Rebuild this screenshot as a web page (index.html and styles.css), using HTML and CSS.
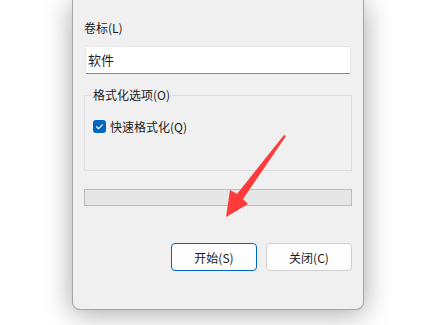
FILE: index.html
```html
<!doctype html>
<html lang="zh-CN">
<head>
    <meta charset="utf-8"/>
    <title>格式化</title>
    <link rel="stylesheet" href="styles.css">
</head>
<body>

<!--对话框-->
<div class="page">
    <div class="dialog">
        <label class="label" for="vol">卷标(L)</label>
        <input class="input" id="vol" type="text" value="软件"/>

        <fieldset class="group">
            <legend>格式化选项(O)</legend>
            <div class="opt">
                <span class="check">
                    <svg width="13" height="13" viewBox="0 0 13 13"><path d="M3.6 6.8 L5.6 8.7 L9.5 4.6" fill="none" stroke="#fff" stroke-width="1.2" stroke-linecap="round" stroke-linejoin="round"/></svg>
                </span>
                <span>快速格式化(Q)</span>
            </div>
        </fieldset>

        <div class="progress"></div>

        <div class="btns">
            <button class="btn primary">开始(S)</button>
            <button class="btn">关闭(C)</button>
        </div>
    </div>
</div>

<!--红色箭头-->
<svg class="arrow" width="429" height="325" viewBox="0 0 429 325">
    <polygon points="286,136 243,199 248,204 226,217 230,190 237,194 284,135" fill="#fe3a3a"/>
</svg>

</body>
</html>
```

FILE: styles.css
```css
* {
    margin: 0;
    padding: 0;
    box-sizing: border-box;
}
body {
    background: #fff;
    font-family: "Noto Sans CJK SC", "Noto Sans", sans-serif;
    font-size: 12px;
    color: #1b1b1b;
    width: 429px;
    height: 325px;
    overflow: hidden;
    position: relative;
}
.page {
    padding-left: 72px;
}
.dialog {
    width: 292px;
    height: 310px;
    background: #f0f0f0;
    border: 1px solid #a4a4a4;
    border-top: 0;
    border-radius: 0 0 8px 8px;
    box-shadow: 0 3px 28px rgba(0, 0, 0, 0.36);
    padding: 20px 11px 0;
    display: flex;
    flex-direction: column;
}
.label {
    line-height: 16px;
    height: 16px;
}
.input {
    margin: 10px 1px 0;
    height: 28px;
    background: #fff;
    border: 1px solid #e6e6e6;
    border-bottom-color: #868686;
    border-radius: 2px;
    padding: 0 2px 1px;
    font: inherit;
    font-size: 13px;
    color: #1b1b1b;
    outline: none;
}
.group {
    margin-top: 13px;
    border: 1px solid #dcdcdc;
    padding: 0 6px 36px;
    min-inline-size: 0;
}
.group legend {
    padding: 0 2px;
    line-height: 16px;
}
.opt {
    margin-top: 15px;
    height: 16px;
    display: flex;
    align-items: center;
    padding-left: 2px;
}
.check {
    width: 13px;
    height: 13px;
    background: #0067c0;
    border-radius: 3px;
    display: flex;
    margin-right: 4px;
}
.progress {
    margin-top: 18px;
    height: 17px;
    background: #e6e6e6;
    border: 1px solid #bcbcbc;
}
.btns {
    margin-top: 37px;
    display: flex;
    justify-content: flex-end;
    gap: 9px;
}
.btn {
    width: 86px;
    height: 28px;
    background: #fdfdfd;
    border: 1px solid #d0d0d0;
    border-radius: 4px;
    font: inherit;
    color: #1b1b1b;
}
.btn.primary {
    border-color: #0067c0;
}
.arrow {
    position: absolute;
    left: 0;
    top: 0;
    pointer-events: none;
}
```
